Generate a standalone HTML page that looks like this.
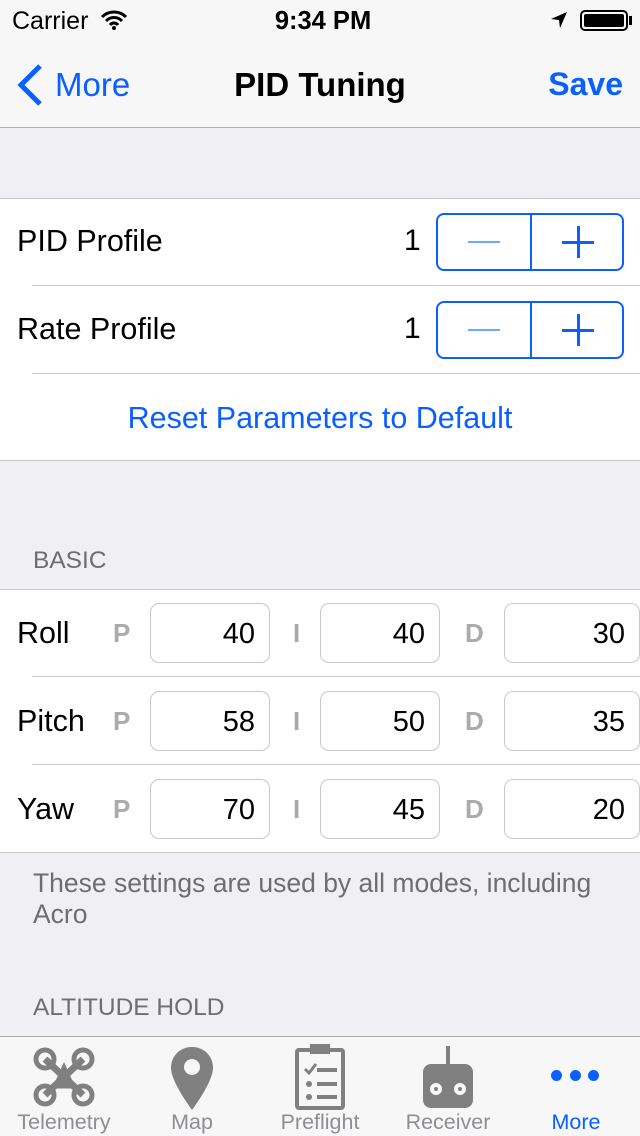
<!DOCTYPE html>
<html><head><meta charset="utf-8"><style>
*{margin:0;padding:0;box-sizing:border-box}
body{width:640px;height:1136px;overflow:hidden;background:#efeff4;font-family:"Liberation Sans",sans-serif;position:relative;color:#000}
.abs{position:absolute}
.white{background:#fff;position:absolute;left:0;width:640px}
.line{position:absolute;height:1px;background:#c8c7cc}
.lbl{position:absolute;font-size:30.5px;left:17px}
.step{position:absolute;left:436px;width:188px;height:58px;border:2px solid #0a60ff;border-radius:8px}
.step .d{position:absolute;left:92px;top:0;bottom:0;width:2px;background:#0a60ff}
.fld{position:absolute;height:60px;border:1px solid #c8c7cc;border-radius:9px;font-size:29px;text-align:right;padding-right:14px;line-height:60px;background:#fff}
.pl{position:absolute;font-size:26px;font-weight:bold;color:#aaa}
.hdr{position:absolute;left:33px;font-size:24.5px;color:#6d6d72}
.tab{position:absolute;top:1110px;font-size:21.5px;color:#8e8e93;text-align:center;width:128px}
</style></head><body>
<div class="abs" style="left:0;top:0;width:640px;height:128px;background:#f7f7f7;border-bottom:1px solid #b2b2b2"></div>
<div class="abs" style="left:12px;top:7px;font-size:25px">Carrier</div>
<svg class="abs" style="left:100px;top:10px" width="28" height="20" viewBox="0 0 28 20"><path d="M2 7a17 17 0 0 1 24 0M6 11a11 11 0 0 1 16 0M10 15a5 5 0 0 1 8 0" stroke="#000" stroke-width="3" fill="none"/><circle cx="14" cy="18" r="2"/></svg>
<div class="abs" style="left:0;width:646px;top:7px;text-align:center;font-size:25.5px;font-weight:bold">9:34 PM</div>
<svg class="abs" style="left:549px;top:10px" width="20" height="20" viewBox="0 0 20 20"><path d="M18 2L2 9l8 1 1 8z"/></svg>
<div class="abs" style="left:580px;top:10px;width:48px;height:21px;border:2px solid #000;border-radius:5px;padding:2px"><div style="background:#000;height:100%;border-radius:2px"></div></div>
<div class="abs" style="left:629px;top:16px;width:3px;height:9px;background:#000"></div>
<svg class="abs" style="left:16px;top:64px" width="28" height="42" viewBox="0 0 28 42"><path d="M24 2L5 21l19 19" stroke="#0a60ff" stroke-width="5" fill="none"/></svg>
<div class="abs" style="left:55px;top:66px;font-size:33px;color:#0a60ff">More</div>
<div class="abs" style="left:0;width:640px;top:66px;text-align:center;font-size:33px;font-weight:bold">PID Tuning</div>
<div class="abs" style="right:17px;top:66px;font-size:32px;font-weight:bold;color:#0a60ff">Save</div>

<div class="white" style="top:198px;height:263px;border-top:1px solid #c8c7cc;border-bottom:1px solid #c8c7cc"></div>
<div class="lbl" style="top:224px">PID Profile</div>
<div class="abs" style="left:404px;top:224px;font-size:30px">1</div>
<div class="step" style="top:213px"><div class="d"></div><div class="abs" style="left:30px;top:26px;width:32px;height:2px;background:#6fa8ff"></div><div class="abs" style="left:124px;top:26px;width:32px;height:3px;background:#0a60ff"></div><div class="abs" style="left:139px;top:11px;width:3px;height:32px;background:#0a60ff"></div></div>
<div class="line" style="left:32px;width:608px;top:285px"></div>
<div class="lbl" style="top:312px">Rate Profile</div>
<div class="abs" style="left:404px;top:312px;font-size:30px">1</div>
<div class="step" style="top:301px"><div class="d"></div><div class="abs" style="left:30px;top:26px;width:32px;height:2px;background:#6fa8ff"></div><div class="abs" style="left:124px;top:26px;width:32px;height:3px;background:#0a60ff"></div><div class="abs" style="left:139px;top:11px;width:3px;height:32px;background:#0a60ff"></div></div>
<div class="line" style="left:32px;width:608px;top:373px"></div>
<div class="abs" style="left:0;width:640px;top:401px;text-align:center;font-size:30.5px;color:#0a60ff">Reset Parameters to Default</div>

<div class="hdr" style="top:547px">BASIC</div>
<div class="white" style="top:589px;height:264px;border-top:1px solid #c8c7cc;border-bottom:1px solid #c8c7cc"></div>
<div class="lbl" style="top:616px">Roll</div>
<div class="pl" style="left:113px;top:618px">P</div><div class="fld" style="left:150px;width:120px;top:603px">40</div>
<div class="pl" style="left:293px;top:618px">I</div><div class="fld" style="left:320px;width:120px;top:603px">40</div>
<div class="pl" style="left:465px;top:618px">D</div><div class="fld" style="left:504px;width:136px;top:603px">30</div>
<div class="line" style="left:32px;width:608px;top:676px"></div>
<div class="lbl" style="top:704px">Pitch</div>
<div class="pl" style="left:113px;top:706px">P</div><div class="fld" style="left:150px;width:120px;top:691px">58</div>
<div class="pl" style="left:293px;top:706px">I</div><div class="fld" style="left:320px;width:120px;top:691px">50</div>
<div class="pl" style="left:465px;top:706px">D</div><div class="fld" style="left:504px;width:136px;top:691px">35</div>
<div class="line" style="left:32px;width:608px;top:764px"></div>
<div class="lbl" style="top:792px">Yaw</div>
<div class="pl" style="left:113px;top:794px">P</div><div class="fld" style="left:150px;width:120px;top:779px">70</div>
<div class="pl" style="left:293px;top:794px">I</div><div class="fld" style="left:320px;width:120px;top:779px">45</div>
<div class="pl" style="left:465px;top:794px">D</div><div class="fld" style="left:504px;width:136px;top:779px">20</div>
<div class="hdr" style="top:868px;line-height:31px;width:600px;font-size:26.5px">These settings are used by all modes, including<br>Acro</div>
<div class="hdr" style="top:994px">ALTITUDE HOLD</div>

<div class="abs" style="left:0;top:1036px;width:640px;height:100px;background:#f7f7f7;border-top:1px solid #a8a8a8"></div>
<svg class="abs" style="left:32px;top:1046px" width="64" height="62" viewBox="0 0 64 62" fill="none" stroke="#808080" stroke-width="5"><circle cx="13" cy="13" r="9"/><circle cx="51" cy="13" r="9"/><circle cx="13" cy="49" r="9"/><circle cx="51" cy="49" r="9"/><path d="M13 13L51 49M51 13L13 49" stroke-width="7"/><path d="M32 22L24 40h16z" fill="#808080"/></svg>
<svg class="abs" style="left:170px;top:1046px" width="44" height="64" viewBox="0 0 44 64"><path d="M22 1C10 1 1 10 1 22c0 14 21 42 21 42s21-28 21-42C43 10 34 1 22 1z" fill="#808080"/><circle cx="22" cy="21" r="8" fill="#f7f7f7"/></svg>
<svg class="abs" style="left:295px;top:1044px" width="50" height="66" viewBox="0 0 50 66" fill="#808080"><rect x="2" y="6" width="46" height="58" rx="2" fill="none" stroke="#808080" stroke-width="4"/><rect x="15" y="0" width="20" height="10"/><path d="M10 25l4 4 7-9" stroke="#808080" stroke-width="3" fill="none"/><rect x="22" y="24" width="20" height="4"/><circle cx="14" cy="40" r="3"/><rect x="22" y="38" width="20" height="4"/><circle cx="14" cy="53" r="3"/><rect x="22" y="51" width="20" height="4"/></svg>
<svg class="abs" style="left:421px;top:1046px" width="54" height="62" viewBox="0 0 54 62"><rect x="25" y="0" width="4" height="20" fill="#808080"/><rect x="2" y="18" width="50" height="44" rx="8" fill="#808080"/><circle cx="15" cy="43" r="6" fill="#f7f7f7"/><circle cx="39" cy="43" r="6" fill="#f7f7f7"/><circle cx="15" cy="43" r="2" fill="#808080"/><circle cx="39" cy="43" r="2" fill="#808080"/></svg>
<div class="abs" style="left:551px;top:1070px;width:11px;height:11px;border-radius:50%;background:#0a60ff"></div>
<div class="abs" style="left:570px;top:1070px;width:11px;height:11px;border-radius:50%;background:#0a60ff"></div>
<div class="abs" style="left:588px;top:1070px;width:11px;height:11px;border-radius:50%;background:#0a60ff"></div>
<div class="tab" style="left:0">Telemetry</div>
<div class="tab" style="left:128px">Map</div>
<div class="tab" style="left:256px">Preflight</div>
<div class="tab" style="left:384px">Receiver</div>
<div class="tab" style="left:512px;color:#0a60ff">More</div>
</body></html>
